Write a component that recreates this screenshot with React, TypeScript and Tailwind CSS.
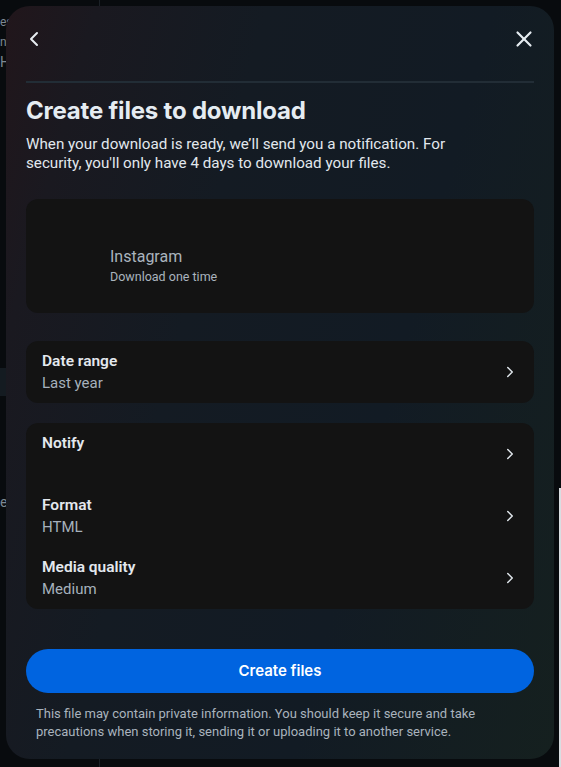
import { ChevronLeft, ChevronRight, X } from "lucide-react";

const body = "font-['Roboto','Liberation_Sans',sans-serif]";
const display = "font-['Inter','Liberation_Sans',sans-serif]";

const Row = ({ title, sub }: { title: string; sub?: string }) => (
  <div className="flex items-center justify-between pl-4 pr-[15px] py-[9px]">
    <div className="flex flex-col">
      <span className="text-[15.5px] leading-[22px] font-semibold text-[#e3e8ee]">{title}</span>
      <span className="text-[15px] leading-[22px] text-[#a6b1bc] min-h-[22px]">{sub}</span>
    </div>
    <ChevronRight className="w-[18px] h-[18px] text-[#dfe5ea]" strokeWidth={2} />
  </div>
);

export default function App() {
  return (
    <div className={`relative h-[767px] w-[561px] overflow-hidden bg-[#080b0e] ${body}`}>
      {/* page behind the dialog */}
      <div className="flex h-full">
        <div className="w-[100px] border-r border-[#1b2127] flex flex-col">
          <span className="mt-[12px] text-[12px] leading-[20px] text-[#7d8892]">es</span>
          <span className="text-[12px] leading-[20px] text-[#7d8892]">nc</span>
          <span className="text-[14px] leading-[20px] text-[#7d8892]">H</span>
          <div className="mt-[296px] h-[28px] bg-[#141b21]" />
          <span className="mt-[96px] text-[14px] leading-[20px] text-[#7d8892]">e</span>
        </div>
        <div className="flex-1" />
      </div>

      {/* dialog */}
      <div className="absolute left-[6px] top-[6px] w-[548px] h-[753px] rounded-[24px] px-5 bg-[linear-gradient(105deg,#21161b_0%,#1a1920_12%,#141b23_35%,#121b24_65%,#15201f_100%)] flex flex-col">
        <div className="flex items-center justify-between h-[36px] mt-[15px]">
          <ChevronLeft className="w-[24px] h-[24px] -ml-[4px] text-[#e6ecf1]" strokeWidth={2} />
          <X className="w-[26px] h-[26px] -mr-[3px] text-[#e6ecf1]" strokeWidth={2} />
        </div>
        <div className="mt-[24px] h-[2px] bg-[#222d36]" />

        <h1 className={`mt-[13px] text-[24px] leading-[30px] font-bold text-[#e5ecf2] tracking-[-0.2px] ${display}`}>
          Create files to download
        </h1>
        <p className="mt-[9px] max-w-[450px] text-[15.2px] leading-[19px] text-[#e2e8ee]">
          When your download is ready, we’ll send you a notification. For security, you'll only have 4 days to download your files.
        </p>

        <div className="mt-[26px] h-[114px] rounded-[12px] bg-[#131313] flex items-center">
          <div className="w-[84px]" />
          <div className="flex flex-col pt-[20px]">
            <span className="text-[16px] leading-[20px] text-[#aab4be]">Instagram</span>
            <span className="text-[12.5px] leading-[19px] text-[#aab4be]">Download one time</span>
          </div>
        </div>

        <div className="mt-[28px] rounded-[12px] bg-[#131313]">
          <Row title="Date range" sub="Last year" />
        </div>

        <div className="mt-[20px] rounded-[12px] bg-[#131313]">
          <Row title="Notify" />
          <Row title="Format" sub="HTML" />
          <Row title="Media quality" sub="Medium" />
        </div>

        <button className={`mt-[40px] h-[44px] rounded-full bg-[#0064e0] text-white text-[15px] font-semibold ${display}`}>
          Create files
        </button>

        <p className="mt-[12px] px-[10px] text-[13px] leading-[18px] text-[#a9b3bd]">
          This file may contain private information. You should keep it secure and take precautions when storing it, sending it or uploading it to another service.
        </p>
      </div>

      <div className="absolute right-0 top-[488px] w-[2px] h-[279px] bg-[#d9dde1]" />
    </div>
  );
}
